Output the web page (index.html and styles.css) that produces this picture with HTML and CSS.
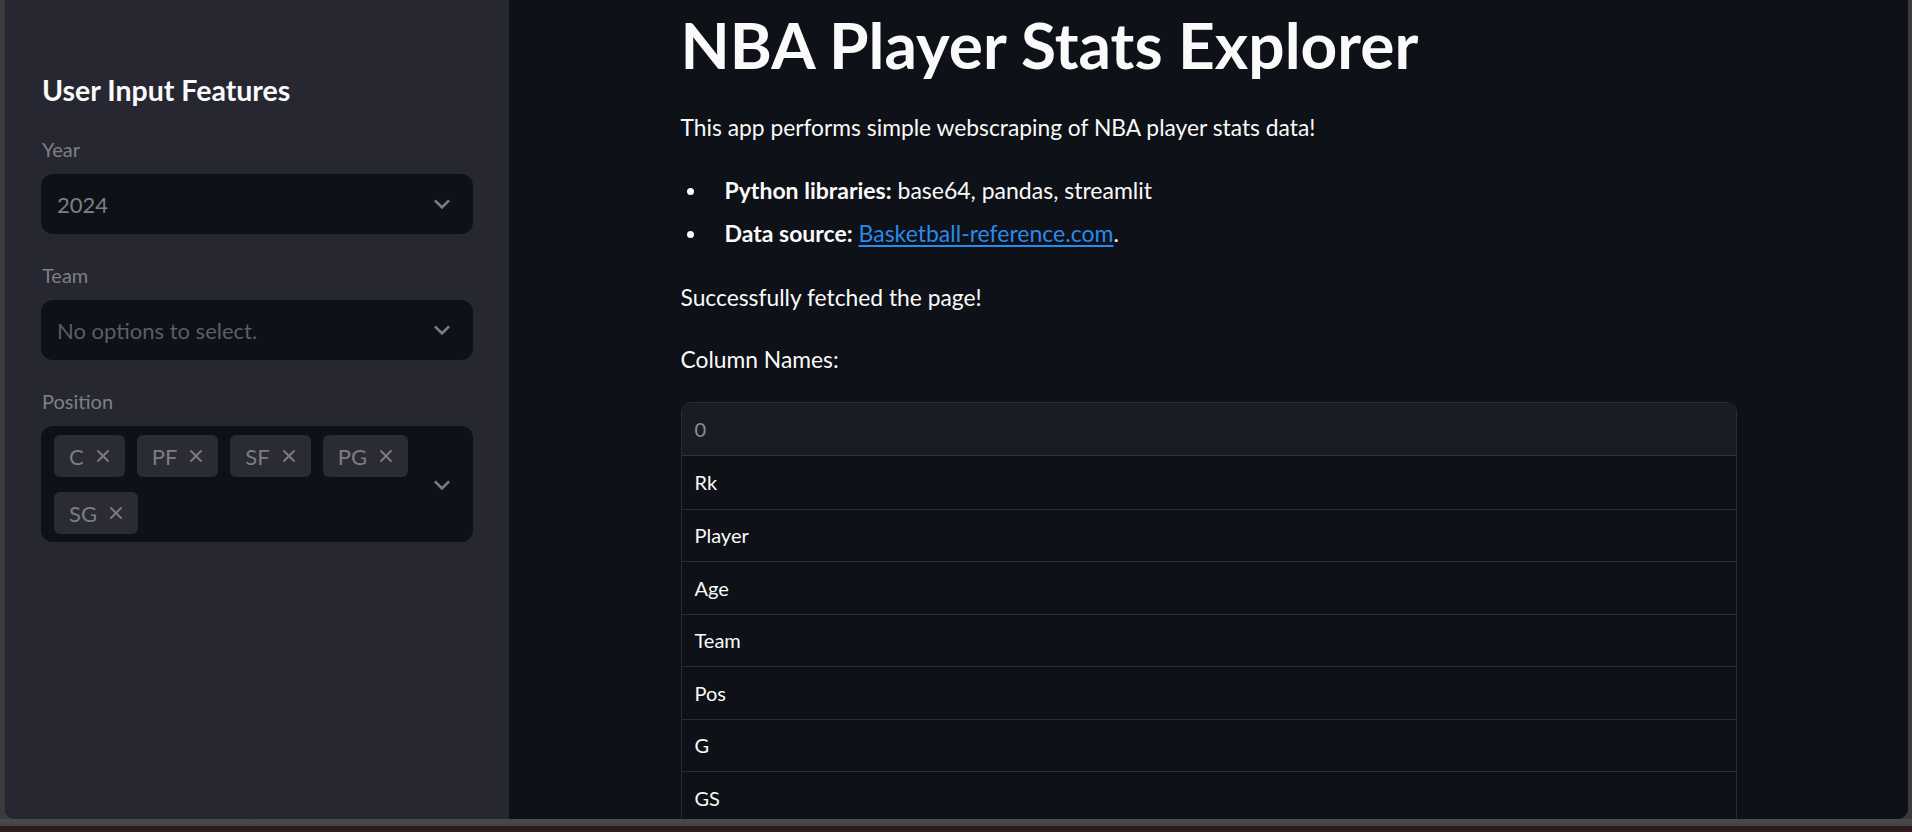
FILE: index.html
```html
<!DOCTYPE html>
<html lang="en">
<head>
<meta charset="utf-8">
<title>NBA Player Stats Explorer</title>
<link rel="stylesheet" href="styles.css">
</head>
<body>
<div class="window">
  <aside class="sidebar">
    <h2 class="side-title">User Input Features</h2>
    <div class="widget">
      <label class="wlabel">Year</label>
      <div class="select">
        <span class="sel-value">2024</span>
        <svg class="chev" viewBox="0 0 24 24" width="32" height="32"><path d="M7.41 8.59L12 13.17l4.59-4.58L18 10l-6 6-6-6 1.41-1.41z" fill="currentColor"/></svg>
      </div>
    </div>
    <div class="widget">
      <label class="wlabel">Team</label>
      <div class="select">
        <span class="sel-placeholder">No options to select.</span>
        <svg class="chev" viewBox="0 0 24 24" width="32" height="32"><path d="M7.41 8.59L12 13.17l4.59-4.58L18 10l-6 6-6-6 1.41-1.41z" fill="currentColor"/></svg>
      </div>
    </div>
    <div class="widget">
      <label class="wlabel">Position</label>
      <div class="select multi">
        <div class="tags">
          <span class="tag">C<svg class="x" viewBox="0 0 12 12" width="12" height="12"><path d="M1 1L11 11M11 1L1 11" stroke="currentColor" stroke-width="1.8" stroke-linecap="round"/></svg></span>
          <span class="tag">PF<svg class="x" viewBox="0 0 12 12" width="12" height="12"><path d="M1 1L11 11M11 1L1 11" stroke="currentColor" stroke-width="1.8" stroke-linecap="round"/></svg></span>
          <span class="tag">SF<svg class="x" viewBox="0 0 12 12" width="12" height="12"><path d="M1 1L11 11M11 1L1 11" stroke="currentColor" stroke-width="1.8" stroke-linecap="round"/></svg></span>
          <span class="tag">PG<svg class="x" viewBox="0 0 12 12" width="12" height="12"><path d="M1 1L11 11M11 1L1 11" stroke="currentColor" stroke-width="1.8" stroke-linecap="round"/></svg></span>
          <span class="tag">SG<svg class="x" viewBox="0 0 12 12" width="12" height="12"><path d="M1 1L11 11M11 1L1 11" stroke="currentColor" stroke-width="1.8" stroke-linecap="round"/></svg></span>
        </div>
        <svg class="chev" viewBox="0 0 24 24" width="32" height="32"><path d="M7.41 8.59L12 13.17l4.59-4.58L18 10l-6 6-6-6 1.41-1.41z" fill="currentColor"/></svg>
      </div>
    </div>
  </aside>
  <main class="main">
    <div class="content">
      <h1 class="title">NBA Player Stats Explorer</h1>
      <p class="text intro">This app performs simple webscraping of NBA player stats data!</p>
      <ul class="bullets">
        <li><span><b>Python libraries:</b> base64, pandas, streamlit</span></li>
        <li><span><b>Data source:</b> <a href="#">Basketball-reference.com</a>.</span></li>
      </ul>
      <p class="text success">Successfully fetched the page!</p>
      <p class="text colnames">Column Names:</p>
      <div class="table">
        <div class="row head">0</div>
        <div class="row">Rk</div>
        <div class="row">Player</div>
        <div class="row">Age</div>
        <div class="row">Team</div>
        <div class="row">Pos</div>
        <div class="row">G</div>
        <div class="row">GS</div>
      </div>
    </div>
  </main>
</div>
<div class="taskbar"></div>
</body>
</html>
```
FILE: styles.css
```css
* { box-sizing: border-box; }
html, body { margin: 0; padding: 0; }
body {
  background: #3b3b3b;
  font-family: Lato, "Liberation Sans", sans-serif;
  color: #fafafa;
  width: 1912px;
  height: 832px;
  overflow: hidden;
}
.window {
  margin: 0 4px 0 5px;
  height: 819px;
  display: flex;
  border-radius: 0 0 10px 10px;
  overflow: hidden;
  background: #0e1117;
}
.taskbar {
  height: 13px;
  background: linear-gradient(to bottom, #4a4a4a 0, #444 7px, #2c1d1f 7px, #301c1e 100%);
}

/* Sidebar */
.sidebar {
  width: 504px;
  flex: none;
  background: #262730;
  padding: 72px 36px 0 36px;
  display: flex;
  flex-direction: column;
  gap: 29px;
}
.side-title {
  margin: 0;
  font-size: 28.5px;
  line-height: 36px;
  font-weight: 700;
  color: #fafafa;
  padding-left: 1px;
}
.widget { display: flex; flex-direction: column; }
.wlabel {
  font-size: 20px;
  line-height: 24px;
  color: #7e8088;
  margin-bottom: 13px;
  padding-left: 1px;
}
.select {
  height: 60px;
  background: #0e1117;
  border-radius: 12px;
  display: flex;
  align-items: center;
  justify-content: space-between;
  padding: 0 15px 0 16px;
}
.sel-value { font-size: 22px; color: #7f8086; }
.sel-placeholder { font-size: 22px; color: #5c5e66; }
.chev { color: #7b7c83; flex: none; }
.select.multi {
  height: 116px;
  padding: 9px 15px 8px 13px;
  align-items: center;
}
.tags {
  display: flex;
  flex-wrap: wrap;
  gap: 15px 12px;
  width: 370px;
  align-self: flex-start;
}
.tag {
  height: 42px;
  background: #2a2b33;
  border-radius: 6px;
  display: inline-flex;
  align-items: center;
  padding: 0 16px 0 15px;
  gap: 13px;
  font-size: 22px;
  color: #7c7d84;
}
.tag .x { color: #7c7d84; }

/* Main */
.main {
  flex: 1;
  display: flex;
  justify-content: center;
}
.content {
  width: 1104px;
  padding: 7px 24px 0 24px;
}
.title {
  margin: 0 0 26px 0;
  font-size: 64px;
  line-height: 76px;
  font-weight: 700;
  color: #fafafa;
}
.text {
  margin: 0;
  font-size: 22.8px;
  line-height: 36px;
  color: #fafafa;
}
.intro { margin-bottom: 27px; }
.bullets {
  list-style: none;
  margin: 0 0 28px 0;
  padding: 0;
  display: flex;
  flex-direction: column;
  gap: 7px;
}
.bullets li {
  display: flex;
  align-items: center;
  font-size: 23px;
  line-height: 36px;
}
.bullets li::before {
  content: "";
  width: 7px;
  height: 7px;
  border-radius: 50%;
  background: #fafafa;
  margin: 3px 31px 0 6px;
  flex: none;
}
.bullets a { color: #2a8aea; text-decoration: underline; text-underline-offset: 3px; }
.success { margin-bottom: 26px; }
.colnames { margin-bottom: 25px; }

.table {
  border: 1px solid #2a2c35;
  border-radius: 10px 10px 0 0;
  overflow: hidden;
}
.row {
  height: 52.5px;
  display: flex;
  align-items: center;
  padding-left: 13px;
  font-size: 20px;
  color: #fafafa;
  border-top: 1px solid #2a2c35;
  background: #0e1117;
}
.row.head {
  height: 53px;
  border-top: none;
  background: #1a1c23;
  color: #8d8e94;
  border-bottom: 1px solid #31333b;
}
.row.head + .row { border-top: none; }
```
